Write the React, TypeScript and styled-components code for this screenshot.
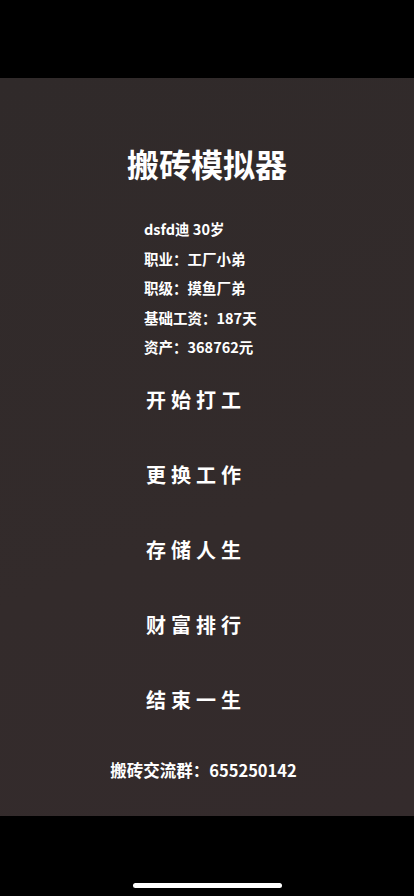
import React from "react";
import styled, { createGlobalStyle } from "styled-components";

const GlobalStyle = createGlobalStyle`
  html, body {
    margin: 0;
    padding: 0;
    background: #000;
  }
  body {
    font-family: "Noto Sans CJK SC", "Noto Sans", sans-serif;
    color: #fff;
  }
`;

const Screen = styled.div`
  width: 414px;
  height: 896px;
  display: flex;
  flex-direction: column;
  background: #000;
`;

const TopBar = styled.div`
  height: 78px;
  flex: none;
`;

const Panel = styled.main`
  height: 738px;
  flex: none;
  display: flex;
  flex-direction: column;
  align-items: center;
  background: linear-gradient(160deg, #302a2a 0%, #332b2b 60%, #342b2c 100%);
  box-sizing: border-box;
  padding-top: 65px;
`;

const Title = styled.h1`
  margin: 0;
  font-size: 32px;
  line-height: 40px;
  font-weight: 700;
  letter-spacing: 0;
`;

const Info = styled.div`
  align-self: flex-start;
  margin: 31px 0 0 144px;
  display: flex;
  flex-direction: column;
`;

const InfoLine = styled.div`
  font-size: 14.5px;
  line-height: 29.5px;
  font-weight: 700;
`;

const Menu = styled.nav`
  margin-top: 23px;
  display: flex;
  flex-direction: column;
  align-items: center;
  gap: 45px;
`;

const MenuButton = styled.button`
  background: none;
  border: 0;
  padding: 0;
  margin-right: 22px;
  color: #fff;
  font-family: inherit;
  font-size: 20px;
  line-height: 30px;
  font-weight: 700;
  letter-spacing: 5px;
  cursor: pointer;
`;

const Footer = styled.div`
  margin: 43px 7px 0 0;
  font-size: 16.5px;
  line-height: 24px;
  font-weight: 700;
`;

const BottomBar = styled.div`
  flex: 1;
  display: flex;
  justify-content: center;
  align-items: flex-end;
  padding-bottom: 8px;
`;

const HomeIndicator = styled.div`
  width: 149px;
  height: 5px;
  border-radius: 3px;
  background: #fff;
`;

const info = [
  "dsfd迪 30岁",
  "职业：工厂小弟",
  "职级：摸鱼厂弟",
  "基础工资：187天",
  "资产：368762元",
];

const actions = ["开始打工", "更换工作", "存储人生", "财富排行", "结束一生"];

export default function App() {
  return (
    <>
      <GlobalStyle />
      <Screen>
        <TopBar />
        <Panel>
          <Title>搬砖模拟器</Title>
          <Info>
            {info.map((line) => (
              <InfoLine key={line}>{line}</InfoLine>
            ))}
          </Info>
          <Menu>
            {actions.map((a) => (
              <MenuButton key={a}>{a}</MenuButton>
            ))}
          </Menu>
          <Footer>搬砖交流群：655250142</Footer>
        </Panel>
        <BottomBar>
          <HomeIndicator />
        </BottomBar>
      </Screen>
    </>
  );
}
